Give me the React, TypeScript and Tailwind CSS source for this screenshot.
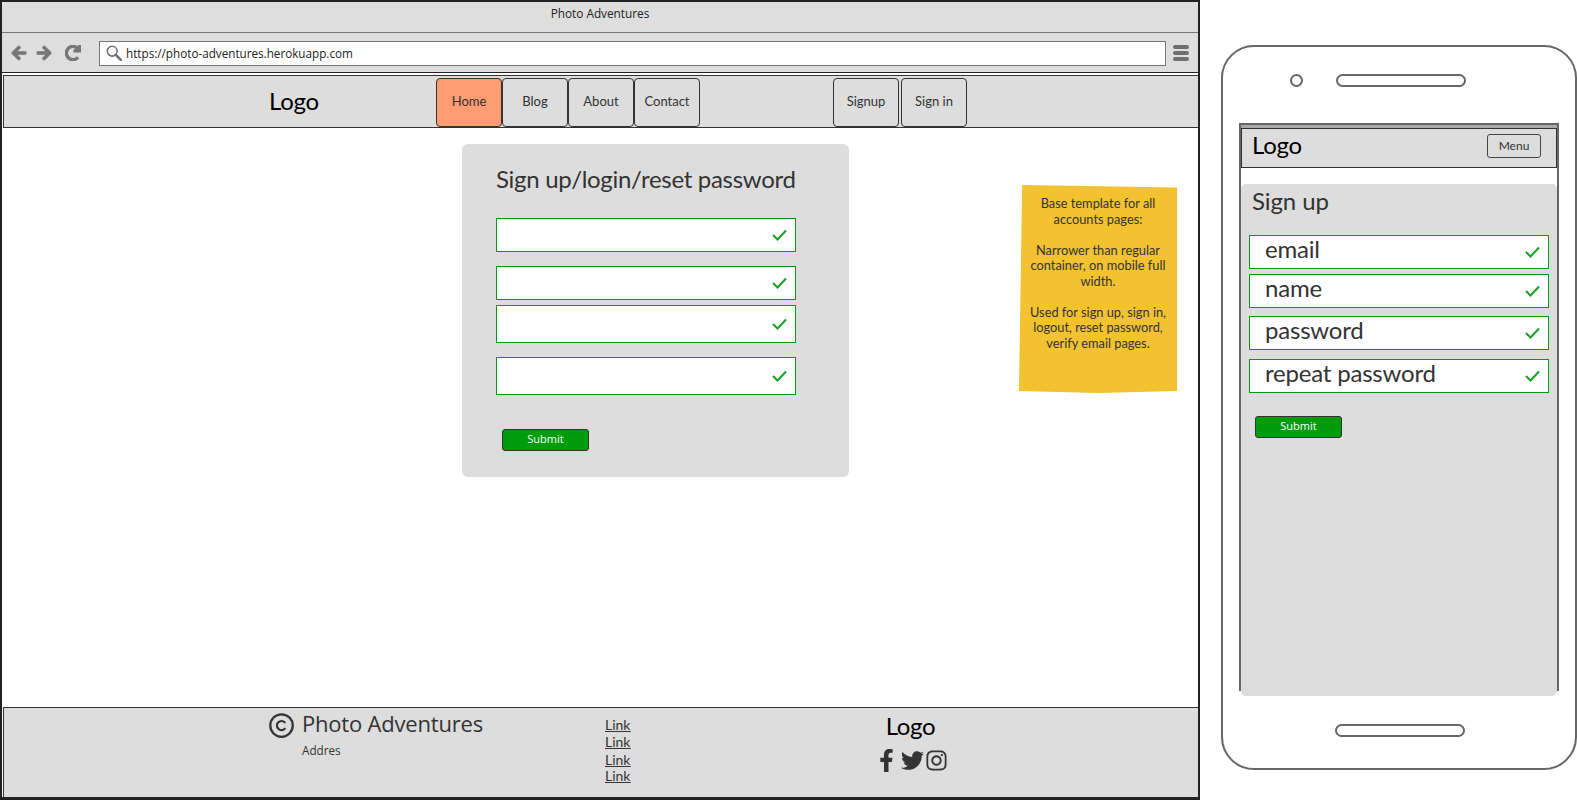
import React from 'react';
import { FaArrowLeft, FaArrowRight, FaRedo, FaFacebookF, FaTwitter, FaInstagram } from 'react-icons/fa';
import { Copyright } from 'lucide-react';

const CheckMark = () => (
  <svg viewBox="0 0 15 12" className="w-[15px] h-[12px] shrink-0" fill="none" stroke="#16a326" strokeWidth="2">
    <path d="M1 6 L5.5 10.5 L14 1.5" />
  </svg>
);

const SearchGlyph = () => (
  <svg viewBox="0 0 16 16" className="w-[16px] h-[16px] shrink-0" fill="none" stroke="#6f6f6f">
    <circle cx="6.2" cy="6.2" r="4.9" strokeWidth="1.6" />
    <path d="M9.8 9.8 L14.8 14.8" strokeWidth="2.6" strokeLinecap="round" />
  </svg>
);

const Field = ({ className, children }: { className: string; children?: React.ReactNode }) => (
  <div className={`flex items-center justify-between w-[300px] bg-white border border-[#009a0e] pr-[8px] ${className}`}>
    {children}
    <span className="ml-auto mb-[1px]"><CheckMark /></span>
  </div>
);

const MobileLabel = ({ text }: { text: string }) => (
  <span className="pl-[15px] pb-[6px] text-[24px] leading-[28px] tracking-[-0.2px] text-[#333] font-['Lato',sans-serif]">{text}</span>
);

const SubmitButton = ({ className }: { className: string }) => (
  <div className={`flex items-center justify-center w-[87px] h-[22px] pb-[1px] rounded-[3px] border border-[#333] bg-[#009c0c] text-white text-[11px] font-['Open_Sans',sans-serif] ${className}`}>
    Submit
  </div>
);

const NavTab = ({ label, active, className }: { label: string; active?: boolean; className?: string }) => (
  <div className={`flex items-center justify-center w-[66px] h-[49px] pb-[2px] border border-[#333] rounded-[4px] text-[13px] text-[#333] font-['Lato',sans-serif] ${active ? 'bg-[#ff9c72]' : 'bg-[#dddddd]'} ${className ?? ''}`}>
    {label}
  </div>
);

const BrowserWindow = () => (
  <div className="flex flex-col w-[1200px] h-[800px] shrink-0 border-x-2 border-t-2 border-b-[3px] border-[#222] bg-white">
    <div className="flex justify-center h-[31px] pt-[2px] bg-[#dedede] border-b border-[#777] text-[11.8px] leading-[18px] text-[#222] font-['Open_Sans',sans-serif]">
      Photo Adventures
    </div>
    <div className="flex items-center h-[40px] pt-[1px] bg-[#dedede] border-b border-[#222] text-[#777]">
      <FaArrowLeft className="ml-[9px] text-[16px]" stroke="currentColor" strokeWidth={36} />
      <FaArrowRight className="ml-[9px] text-[16px]" stroke="currentColor" strokeWidth={36} />
      <FaRedo className="ml-[13px] text-[16px]" stroke="currentColor" strokeWidth={36} />
      <div className="flex items-center ml-[18px] w-[1067px] h-[25px] bg-white border border-[#777] pl-[6px]">
        <SearchGlyph />
        <span className="ml-[4px] mt-[1px] text-[11.7px] text-[#222] font-['Open_Sans',sans-serif]">https://photo-adventures.herokuapp.com</span>
      </div>
      <div className="flex flex-col gap-[2px] ml-[7px]">
        <span className="w-[16px] h-[4px] rounded-full bg-[#6f6f6f]" />
        <span className="w-[16px] h-[4px] rounded-full bg-[#6f6f6f]" />
        <span className="w-[16px] h-[4px] rounded-full bg-[#6f6f6f]" />
      </div>
    </div>
    <div className="flex items-end h-[53px] mt-[2px] ml-[1px] bg-[#dddddd] border border-[#333] border-r-0">
      <div className="w-[432px] self-center pl-[265px] pb-[2px] text-[24px] tracking-[-0.3px] text-black font-['Lato',sans-serif]">Logo</div>
      <NavTab label="Home" active />
      <NavTab label="Blog" />
      <NavTab label="About" />
      <NavTab label="Contact" />
      <NavTab label="Signup" className="ml-[133px]" />
      <NavTab label="Sign in" className="ml-[2px]" />
    </div>
    <div className="relative flex-1">
      <div className="flex flex-col w-[387px] h-[333px] ml-[460px] mt-[16px] pl-[34px] bg-[#dddddd] rounded-[6px]">
        <h1 className="mt-[18px] h-[36px] text-[24px] leading-[34px] tracking-[-0.3px] whitespace-nowrap text-[#333] font-['Lato',sans-serif]">Sign up/login/reset password</h1>
        <Field className="h-[34px] mt-[20px]" />
        <Field className="h-[34px] mt-[14px]" />
        <Field className="h-[38px] mt-[5px]" />
        <Field className="h-[38px] mt-[14px]" />
        <SubmitButton className="mt-[34px] ml-[6px]" />
      </div>
      <div className="absolute left-[1017px] top-[57px] w-[158px] h-[208px] bg-[#f2c230] [clip-path:polygon(2%_0,100%_1.2%,100%_99%,50%_100%,0_99%)] px-[5px] pt-[11px] text-center text-[12.8px] leading-[15.5px] text-[#333] font-['Lato',sans-serif]">
        <p>Base template for all accounts pages:</p>
        <p className="mt-[15.5px]">Narrower than regular container, on mobile full width.</p>
        <p className="mt-[15.5px]">Used for sign up, sign in, logout, reset password, verify email pages.</p>
      </div>
    </div>
    <div className="flex items-start h-[90px] ml-[1px] bg-[#dddddd] border-t border-l border-[#333] text-[#333]">
      <div className="flex w-[336px] pl-[264px] shrink-0">
        <Copyright size={27} strokeWidth={2} className="mt-[4px] shrink-0" />
        <div className="ml-[7px] whitespace-nowrap">
          <div className="text-[22px] leading-[30px] tracking-[-0.2px] font-['Open_Sans',sans-serif]">Photo Adventures</div>
          <div className="mt-[4px] text-[11.7px] leading-[16px] font-['Open_Sans',sans-serif]">Addres</div>
        </div>
      </div>
      <div className="flex flex-col ml-[265px] mt-[8px] text-[14px] leading-[17px] underline font-['Lato',sans-serif]">
        <a href="#">Link</a>
        <a href="#">Link</a>
        <a href="#" className="mt-[1px]">Link</a>
        <a href="#" className="-mt-[1px]">Link</a>
      </div>
      <div className="flex flex-col items-center ml-[245px] mt-[3px]">
        <div className="pr-[3px] text-[24px] leading-[30px] tracking-[-0.3px] text-black font-['Lato',sans-serif]">Logo</div>
        <div className="flex items-center mt-[8px]">
          <FaFacebookF className="text-[23px]" />
          <FaTwitter className="text-[23px] ml-[3px]" />
          <FaInstagram className="text-[23px] ml-[1px]" />
        </div>
      </div>
    </div>
  </div>
);

const PhoneMockup = () => (
  <div className="flex flex-col w-[356px] h-[725px] ml-[21px] mt-[45px] shrink-0 border-2 border-[#666] rounded-[33px] bg-white">
    <div className="flex items-center mt-[27px] ml-[67px]">
      <span className="w-[13px] h-[13px] rounded-full border-2 border-[#666]" />
      <span className="w-[130px] h-[13px] ml-[33px] rounded-full border-2 border-[#666]" />
    </div>
    <div className="flex flex-col w-[320px] h-[568px] mt-[36px] ml-[16px] shrink-0 border-x-2 border-t-2 border-[#666]">
      <div className="h-[3px] shrink-0 bg-[#a8a8a8]" />
      <div className="flex items-start justify-between h-[40px] shrink-0 pl-[10px] pr-[15px] pt-[2px] bg-[#dddddd] border border-[#333]">
        <span className="text-[24px] leading-[28px] tracking-[-0.3px] text-black font-['Lato',sans-serif]">Logo</span>
        <div className="flex items-center justify-center mt-[3px] w-[54px] h-[24px] border border-[#444] rounded-[3px] text-[12px] text-[#333] font-['Lato',sans-serif]">Menu</div>
      </div>
      <div className="flex flex-col h-[512px] mt-[16px] shrink-0 pl-[8px] bg-[#dddddd] rounded-[5px]">
        <h2 className="pl-[3px] mt-[1px] h-[36px] text-[24px] leading-[32px] tracking-[-0.1px] text-[#333] font-['Lato',sans-serif]">Sign up</h2>
        <Field className="h-[34px] mt-[14px]"><MobileLabel text="email" /></Field>
        <Field className="h-[34px] mt-[5px]"><MobileLabel text="name" /></Field>
        <Field className="h-[34px] mt-[8px]"><MobileLabel text="password" /></Field>
        <Field className="h-[34px] mt-[9px]"><MobileLabel text="repeat password" /></Field>
        <SubmitButton className="mt-[23px] ml-[6px]" />
      </div>
    </div>
    <span className="w-[130px] h-[13px] mt-[33px] ml-[112px] rounded-full border-2 border-[#666]" />
  </div>
);

export default function App() {
  return (
    <div className="flex items-start w-[1577px] h-[800px] overflow-hidden bg-white">
      <BrowserWindow />
      <PhoneMockup />
    </div>
  );
}
